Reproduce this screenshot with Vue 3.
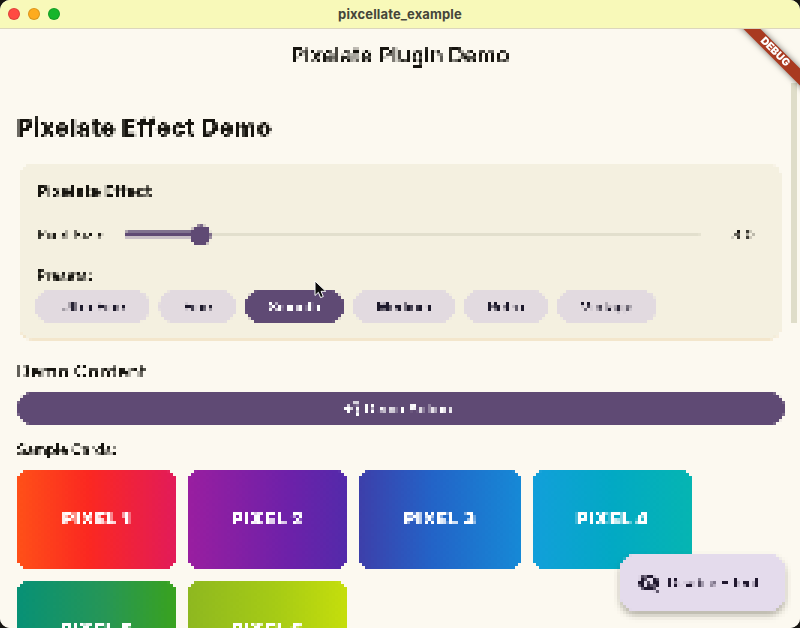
<script setup>
import { ref } from 'vue'

const presets = ['Ultra Fine', 'Fine', 'Smooth', 'Medium', 'Retro', 'Vintage']
const active = ref('Smooth')
const cards = [1, 2, 3, 4, 5, 6]
</script>

<template>
  <div class="desktop">
    <svg class="defs" width="0" height="0" aria-hidden="true">
      <!-- samples one pixel per 3x3 cell, then grows it to fill the cell -->
      <filter id="pixelate" filterUnits="userSpaceOnUse" primitiveUnits="userSpaceOnUse" x="-1" y="0" width="804" height="603" color-interpolation-filters="sRGB">
        <feFlood x="0" y="1" width="1" height="1" flood-color="#000" result="p" />
        <feOffset in="p" dx="0" dy="0" x="-1" y="0" width="3" height="3" result="cell" />
        <feTile in="cell" x="-1" y="0" width="804" height="603" result="grid" />
        <feComposite in="SourceGraphic" in2="grid" operator="in" />
        <feMorphology operator="dilate" radius="1" />
      </filter>
    </svg>
    <div class="window">
      <header class="titlebar">
        <div class="lights"><i class="red"></i><i class="amber"></i><i class="green"></i></div>
        <span>pixcellate_example</span>
      </header>
      <div class="stage">
        <div class="app">
          <div class="appbar">Pixelate Plugin Demo</div>
          <main>
            <h1>Pixelate Effect Demo</h1>
            <section class="panel">
              <h2>Pixelate Effect</h2>
              <div class="slider-row">
                <span class="label">Pixel Size:</span>
                <div class="slider"><b></b><em></em><s></s></div>
                <span class="value">3.0</span>
              </div>
              <div class="presets-label">Presets:</div>
              <div class="chips">
                <button v-for="p in presets" :key="p" :class="['chip', p.toLowerCase().replace(' ', '-'), { on: p === active }]" @click="active = p">{{ p }}</button>
              </div>
            </section>
            <h3>Demo Content</h3>
            <button class="action">
              <svg width="18" height="18" viewBox="0 0 24 24"><path fill="currentColor" d="M8 5l2.200 5L15 12l-4.800 2L8 19l-2.200-5L1 12l4.800-2zM13 3h9v4h-5zM18 10h4v4h-4zM19 15h4v7h-4z" /></svg>
              <span>Demo Action</span>
            </button>
            <div class="sample">Sample Cards:</div>
            <div class="cards">
              <div v-for="n in cards" :key="n" :class="['card', 'c' + n]">PIXEL {{ n }}</div>
            </div>
          </main>
          <button class="fab">
            <svg width="24" height="24" viewBox="0 0 24 24"><path fill="currentColor" d="M12 7c2.760 0 5 2.240 5 5 0 .65-.13 1.260-.36 1.830l2.920 2.920c1.510-1.260 2.700-2.890 3.430-4.750-1.730-4.390-6-7.500-11-7.500-1.400 0-2.740.25-3.980.7l2.160 2.160C10.740 7.130 11.350 7 12 7zM2 4.270l2.740 2.740C3.080 8.300 1.780 10.020 1 12c1.730 4.390 6 7.500 11 7.500 1.550 0 3.030-.3 4.380-.84l3.350 3.340L21 20.730 3.270 3 2 4.270zM7.530 9.800l1.550 1.550C9.030 11.560 9 11.780 9 12c0 1.660 1.340 3 3 3 .22 0 .44-.03.65-.08l1.550 1.550c-.67.33-1.410.53-2.200.53-2.760 0-5-2.240-5-5 0-.79.2-1.530.53-2.200z" /></svg>
            <span>Disable Effect</span>
          </button>
        </div>
        <div class="scrollbar"></div>
        <div class="debug-clip"><div class="debug">DEBUG</div></div>
        <svg class="cursor" width="14" height="20" viewBox="0 0 14 20"><path d="M1 1v14.500l3.400-3.200 2.200 5.300 2.700-1.100-2.200-5.200h4.700z" fill="#0c0c0c" stroke="#fff" stroke-width="1" /></svg>
      </div>
    </div>
  </div>
</template>

<style>
body { margin: 0; overflow: hidden; background: #171512; }
</style>

<style scoped>
* { box-sizing: border-box; }
.desktop { width: 800px; height: 628px; background: #171512; overflow: hidden; font-family: Inter, "Liberation Sans", sans-serif; color: #17150f; }
.defs { position: absolute; }
.window { width: 800px; height: 628px; border-radius: 10px; overflow: hidden; background: #fcf9f0; }
.titlebar { position: relative; height: 29px; background: #f8f9b9; border-bottom: 1px solid #dcd6bd; display: flex; align-items: center; justify-content: center; font-size: 13px; font-weight: 700; color: #45453a; }
.titlebar span { letter-spacing: 0.13px; }
.lights { position: absolute; left: 8px; top: 8px; display: flex; gap: 8px; }
.lights i { width: 12px; height: 12px; border-radius: 50%; border: 1px solid #0002; }
.red { background: #ff4a42; }
.amber { background: #fdab1e; }
.green { background: #16b52b; }
.stage { position: relative; height: 599px; overflow: hidden; }
.app { position: relative; height: 603px; background: #fcf9f0; filter: url(#pixelate); }
button { border: 0; font-family: inherit; padding: 0; }
.appbar { height: 56px; display: flex; align-items: center; justify-content: center; font-size: 21.500px; font-weight: 600; padding-bottom: 4px; }
main { padding: 27px 15px 0 17px; display: flex; flex-direction: column; }
h1 { margin: 0; font-size: 24px; line-height: 32px; font-weight: 800; letter-spacing: 0.5px; white-space: nowrap; }
.panel { margin: 20px 4px 0 3px; height: 176px; border-radius: 12px; background: #f4f0e0; padding: 15px 17px 0 15px; border-bottom: 2px solid #f3e6cc; }
h2 { margin: 0; padding-left: 2px; font-size: 16px; line-height: 24px; font-weight: 700; letter-spacing: 0.2px; }
.slider-row { margin-top: 9px; height: 45px; display: flex; align-items: center; font-size: 14px; font-weight: 600; }
.label { width: 90px; padding-left: 2px; white-space: nowrap; }
.slider { position: relative; width: 576px; height: 20px; }
.slider b, .slider em { position: absolute; border-radius: 3px; }
.slider b { left: 0; right: 0; top: 9px; height: 2px; background: #e2dfcd; }
.slider em { left: 0; width: 75px; top: 6px; height: 9px; background: linear-gradient(#80728f 0 3px, #5f4a74 3px 6px, #c9c0c6 6px); }
.slider s { position: absolute; left: 65px; top: 0; width: 21px; height: 21px; border-radius: 50%; background: #5f4a74; }
.value { width: 32px; margin-left: 32px; }
.presets-label { padding-left: 2px; font-size: 14px; line-height: 20px; font-weight: 600; margin-top: 9px; }
.chips { display: flex; gap: 9px; margin-top: 4px; }
.chip { height: 33px; border-radius: 16px; background: #e2dae0; color: #1d192b; font-size: 14px; font-weight: 600; }
.chip.on { background: #5f4a74; color: #fff; }
.ultra-fine { width: 115px; }
.fine { width: 77px; }
.smooth { width: 99px; }
.medium { width: 102px; }
.retro { width: 84px; }
.vintage { width: 100px; }
h3 { margin: 18px 0 0; font-size: 18px; line-height: 28px; font-weight: 600; letter-spacing: 0.4px; }
.action { margin-top: 6px; height: 33px; border-radius: 17px; background: #5f4a74; color: #fff; display: flex; align-items: center; justify-content: center; gap: 5px; font-size: 14px; font-weight: 600; padding-right: 8px; }
.sample { margin-top: 15px; font-size: 14px; line-height: 20px; font-weight: 600; letter-spacing: 0.1px; }
.cards { margin-top: 10px; display: flex; flex-wrap: wrap; gap: 12px; }
.card { width: 159px; height: 99px; border-radius: 12px; display: flex; align-items: center; justify-content: center; color: #fff; font-size: 18px; font-weight: 900; letter-spacing: 0.6px; padding: 0 0 3px; }
.c1 { background: linear-gradient(90deg, #ff5018, #fb2821 45%, #e21b59); }
.c2 { background: linear-gradient(90deg, #991ea0, #6c21a9 65%, #532aaa); }
.c3 { width: 162px; background: linear-gradient(90deg, #3d3faa, #2363c7 45%, #1689d6); }
.c4 { background: linear-gradient(90deg, #129fda, #02a9c4 50%, #05b5b2); }
.c5 { background: linear-gradient(90deg, #079176, #269656 55%, #39a21e); }
.c6 { background: linear-gradient(90deg, #8eb820, #a6cb15 55%, #c5de0c); }
.fab { position: absolute; left: 620px; top: 525px; width: 165px; height: 57px; border-radius: 16px; background: #e4dbec; color: #21182f; display: flex; align-items: center; padding-left: 17px; gap: 7px; font-size: 14px; font-weight: 600; letter-spacing: -0.2px; box-shadow: 0 4px 6px #55503f70; white-space: nowrap; }
.scrollbar { position: absolute; left: 791px; top: 54px; width: 6px; height: 240px; background: #dfddc9; }
.debug-clip { position: absolute; right: 0; top: 0; width: 80px; height: 80px; overflow: hidden; }
.debug { position: absolute; left: -15px; top: 17px; width: 140px; height: 12px; transform: rotate(45deg); background: #a93a20; color: #fff; font-size: 10.500px; line-height: 12px; text-align: center; font-weight: 900; box-shadow: 0 0 6px #0008; }
.cursor { position: absolute; left: 314px; top: 251px; }
</style>
